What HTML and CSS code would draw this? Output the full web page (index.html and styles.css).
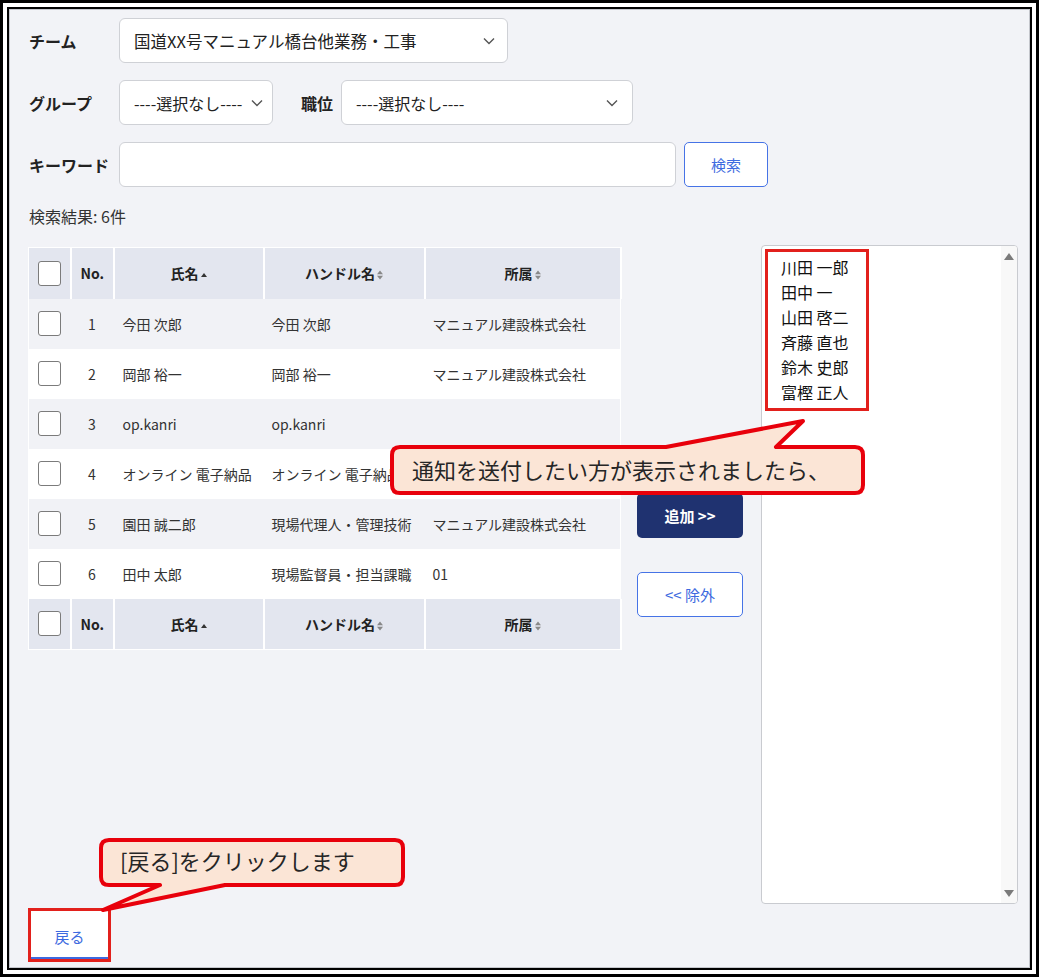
FILE: index.html
```
<!DOCTYPE html>
<html lang="ja">

<head>
    <meta charset="UTF-8">
    <meta name="viewport" content="width=device-width, initial-scale=1.0">
    <title>通知先選択</title>
    <link rel="stylesheet" href="styles.css">
</head>

<body>
    <div class="frame">
        <div class="screen">
            <div class="form-row">
                <span class="label">チーム</span>
                <div class="select select-team">
                    <span>国道XX号マニュアル橋台他業務・工事</span>
                    <svg width="12" height="8" viewBox="0 0 12 8"><path d="M1 1.5l5 5 5-5" fill="none" stroke="#555" stroke-width="1.4"/></svg>
                </div>
            </div>
            <div class="form-row">
                <span class="label">グループ</span>
                <div class="select select-group">
                    <span>----選択なし----</span>
                    <svg width="12" height="8" viewBox="0 0 12 8"><path d="M1 1.5l5 5 5-5" fill="none" stroke="#555" stroke-width="1.4"/></svg>
                </div>
                <span class="label label-short">職位</span>
                <div class="select select-post">
                    <span>----選択なし----</span>
                    <svg width="12" height="8" viewBox="0 0 12 8"><path d="M1 1.5l5 5 5-5" fill="none" stroke="#555" stroke-width="1.4"/></svg>
                </div>
            </div>
            <div class="form-row">
                <span class="label">キーワード</span>
                <div class="text-input"></div>
                <button class="btn btn-outline btn-search">検索</button>
            </div>

            <p class="result-count">検索結果: 6件</p>

            <div class="main">
                <div class="table-wrap">
                    <table class="users">
                        <colgroup>
                            <col style="width:42px">
                            <col style="width:43px">
                            <col style="width:150px">
                            <col style="width:161px">
                            <col style="width:196px">
                        </colgroup>
                        <thead>
                            <tr>
                                <th class="c-check"><span class="checkbox"></span></th>
                                <th class="c-no">No.</th>
                                <th>氏名<svg class="sort" width="6" height="10" viewBox="0 0 6 10"><path d="M0 7h6L3 3z" fill="#333"/></svg></th>
                                <th>ハンドル名<svg class="sort" width="6" height="10" viewBox="0 0 6 10"><path d="M0 4.3h6L3 0.5zM0 5.7h6L3 9.5z" fill="#888"/></svg></th>
                                <th>所属<svg class="sort" width="6" height="10" viewBox="0 0 6 10"><path d="M0 4.3h6L3 0.5zM0 5.7h6L3 9.5z" fill="#888"/></svg></th>
                            </tr>
                        </thead>
                        <tbody>
                            <tr>
                                <td class="c-check"><span class="checkbox"></span></td>
                                <td class="c-no">1</td>
                                <td>今田 次郎</td>
                                <td>今田 次郎</td>
                                <td>マニュアル建設株式会社</td>
                            </tr>
                            <tr>
                                <td class="c-check"><span class="checkbox"></span></td>
                                <td class="c-no">2</td>
                                <td>岡部 裕一</td>
                                <td>岡部 裕一</td>
                                <td>マニュアル建設株式会社</td>
                            </tr>
                            <tr>
                                <td class="c-check"><span class="checkbox"></span></td>
                                <td class="c-no">3</td>
                                <td>op.kanri</td>
                                <td>op.kanri</td>
                                <td></td>
                            </tr>
                            <tr>
                                <td class="c-check"><span class="checkbox"></span></td>
                                <td class="c-no">4</td>
                                <td>オンライン 電子納品</td>
                                <td>オンライン 電子納品</td>
                                <td></td>
                            </tr>
                            <tr>
                                <td class="c-check"><span class="checkbox"></span></td>
                                <td class="c-no">5</td>
                                <td>園田 誠二郎</td>
                                <td>現場代理人・管理技術</td>
                                <td>マニュアル建設株式会社</td>
                            </tr>
                            <tr>
                                <td class="c-check"><span class="checkbox"></span></td>
                                <td class="c-no">6</td>
                                <td>田中 太郎</td>
                                <td>現場監督員・担当課職</td>
                                <td>01</td>
                            </tr>
                        </tbody>
                        <tfoot>
                            <tr>
                                <th class="c-check"><span class="checkbox"></span></th>
                                <th class="c-no">No.</th>
                                <th>氏名<svg class="sort" width="6" height="10" viewBox="0 0 6 10"><path d="M0 7h6L3 3z" fill="#333"/></svg></th>
                                <th>ハンドル名<svg class="sort" width="6" height="10" viewBox="0 0 6 10"><path d="M0 4.3h6L3 0.5zM0 5.7h6L3 9.5z" fill="#888"/></svg></th>
                                <th>所属<svg class="sort" width="6" height="10" viewBox="0 0 6 10"><path d="M0 4.3h6L3 0.5zM0 5.7h6L3 9.5z" fill="#888"/></svg></th>
                            </tr>
                        </tfoot>
                    </table>
                </div>

                <div class="move-buttons">
                    <button class="btn btn-add">追加 &gt;&gt;</button>
                    <button class="btn btn-outline btn-remove">&lt;&lt; 除外</button>
                </div>

                <div class="listbox">
                    <div class="list-area">
                        <ul class="picked">
                            <li>川田 一郎</li>
                            <li>田中 一</li>
                            <li>山田 啓二</li>
                            <li>斉藤 直也</li>
                            <li>鈴木 史郎</li>
                            <li>富樫 正人</li>
                        </ul>
                    </div>
                    <div class="scrollbar">
                        <svg width="10" height="7" viewBox="0 0 10 7"><path d="M0 7h10L5 0z" fill="#7a7a7a"/></svg>
                        <svg width="10" height="7" viewBox="0 0 10 7"><path d="M0 0h10L5 7z" fill="#7a7a7a"/></svg>
                    </div>
                </div>
            </div>

            <button class="btn btn-back">戻る</button>
        </div>

        <!-- annotation balloons -->
        <svg class="callouts" width="1039" height="977" viewBox="0 0 1039 977">
            <path d="M397 444H663L800 418L773 444H852Q860 444 860 452V482Q860 490 852 490H397Q389 490 389 482V452Q389 444 397 444Z" fill="#fbe5d6" stroke="#e8000b" stroke-width="4" stroke-linejoin="round"/>
            <path d="M106 837H392Q400 837 400 845V874Q400 882 392 882H222L100 907L157 882H106Q98 882 98 874V845Q98 837 106 837Z" fill="#fbe5d6" stroke="#e8000b" stroke-width="4" stroke-linejoin="round"/>
        </svg>
        <div class="note note-list">通知を送付したい方が表示されましたら、</div>
        <div class="note note-back">[戻る]をクリックします</div>
    </div>
</body>

</html>
```
FILE: styles.css
```
    * {
        box-sizing: border-box;
    }

    body {
        margin: 0;
        padding: 0;
        font-family: "Noto Sans CJK JP", "Noto Sans", sans-serif;
        color: #222;
        background: #fff;
    }

    .frame {
        position: relative;
        width: 1039px;
        height: 977px;
        border: 3px solid #000;
        padding: 4px;
        background: #fff;
    }

    .screen {
        height: 100%;
        border: 2px solid #000;
        outline: 1px solid #c4c6cc;
        outline-offset: -3px;
        background-color: #f2f3f7;
        padding: 9px 10px 0 19px;
    }

    .form-row {
        display: flex;
        align-items: center;
        height: 45px;
        margin-bottom: 17px;
    }

    .label {
        width: 91px;
        padding-left: 1px;
        font-size: 16px;
        font-weight: bold;
        color: #222;
    }

    .label-short {
        width: 41px;
        margin-left: 27px;
    }

    .select {
        display: flex;
        align-items: center;
        justify-content: space-between;
        height: 45px;
        padding: 0 12px 0 14px;
        background: #fff;
        border: 1px solid #cfd1d6;
        border-radius: 6px;
        font-size: 16px;
        color: #222;
    }

    .select-team {
        width: 389px;
        font-size: 16.5px;
    }

    .select-group {
        width: 154px;
        padding-right: 9px;
    }

    .select-post {
        width: 292px;
        padding-right: 14px;
    }

    .text-input {
        width: 557px;
        height: 45px;
        background: #fff;
        border: 1px solid #cfd1d6;
        border-radius: 6px;
    }

    .btn {
        font-family: "Noto Sans CJK JP", "Noto Sans", sans-serif;
        font-size: 15px;
        cursor: pointer;
        border-radius: 5px;
    }

    .btn-outline {
        background: #fff;
        color: #3d6ae0;
        border: 1.5px solid #4673e6;
    }

    .btn-search {
        width: 84px;
        height: 45px;
        margin-left: 8px;
    }

    .result-count {
        margin: 12px 0 0 1px;
        font-size: 16px;
        line-height: 24px;
        color: #333;
    }

    .main {
        display: flex;
        align-items: flex-start;
        margin-top: 17px;
        height: 659px;
    }

    .table-wrap {
        width: 592px;
        margin-top: 2px;
    }

    .users {
        width: 592px;
        table-layout: fixed;
        border-collapse: collapse;
        border: 1px solid #fff;
        font-size: 14px;
        color: #333;
    }

    .users th {
        height: 51px;
        background: #e3e6ef;
        border-right: 2px solid #fff;
        font-weight: bold;
        color: #222;
        text-align: center;
        white-space: nowrap;
    }

    .users td {
        height: 50px;
        padding: 0 8px;
        white-space: nowrap;
        overflow: hidden;
    }

    .users td:nth-child(3) {
        padding-left: 9px;
    }

    .users tbody tr:nth-child(odd) td {
        background: #f1f2f6;
    }

    .users tbody tr:nth-child(even) td {
        background: #fff;
    }

    .users .c-check {
        padding: 0 0 0 9px;
        text-align: left;
    }

    .users .c-no {
        text-align: center;
        padding: 0;
    }

    .users th.c-no {
        text-align: left;
        padding-left: 9px;
    }

    .checkbox {
        display: inline-block;
        width: 23px;
        height: 25px;
        vertical-align: middle;
        background: #fff;
        border: 1.5px solid #7b7b7b;
        border-radius: 3px;
    }

    .sort {
        margin-left: 2px;
        vertical-align: -1px;
    }

    .move-buttons {
        display: flex;
        flex-direction: column;
        width: 106px;
        margin: 248px 0 0 17px;
        gap: 34px;
    }

    .btn-add {
        height: 45px;
        background: #1f3270;
        color: #fff;
        border: none;
        font-weight: bold;
        font-size: 15px;
    }

    .btn-remove {
        height: 45px;
    }

    .listbox {
        display: flex;
        width: 257px;
        height: 659px;
        margin-left: 18px;
        background: #fff;
        border: 1px solid #c9cbd0;
        border-radius: 4px;
        overflow: hidden;
    }

    .list-area {
        flex: 1;
        padding: 3px 0 0 3px;
    }

    .picked {
        display: inline-block;
        list-style: none;
        margin: 0;
        padding: 3px 17px 3px 13px;
        border: 3px solid #e2201c;
        font-size: 16px;
        line-height: 25px;
        color: #111;
    }

    .scrollbar {
        display: flex;
        flex-direction: column;
        justify-content: space-between;
        align-items: center;
        width: 16px;
        padding: 7px 0 6px;
        background: #f8f8f8;
    }

    .btn-back {
        display: block;
        width: 77px;
        height: 48px;
        margin: 7px 0 0 3px;
        background: #fff;
        color: #3d6ae0;
        border: none;
        border-bottom: 2px solid #3d6ae0;
        border-radius: 0;
        outline: 3px solid #e2201c;
        font-size: 15px;
        padding-top: 6px;
    }

    .callouts {
        position: absolute;
        left: 0;
        top: 0;
        pointer-events: none;
    }

    .note {
        position: absolute;
        font-size: 22px;
        line-height: 30px;
        color: #262626;
        white-space: nowrap;
    }

    .note-list {
        left: 409px;
        top: 451px;
    }

    .note-back {
        left: 117px;
        top: 842px;
    }
```
